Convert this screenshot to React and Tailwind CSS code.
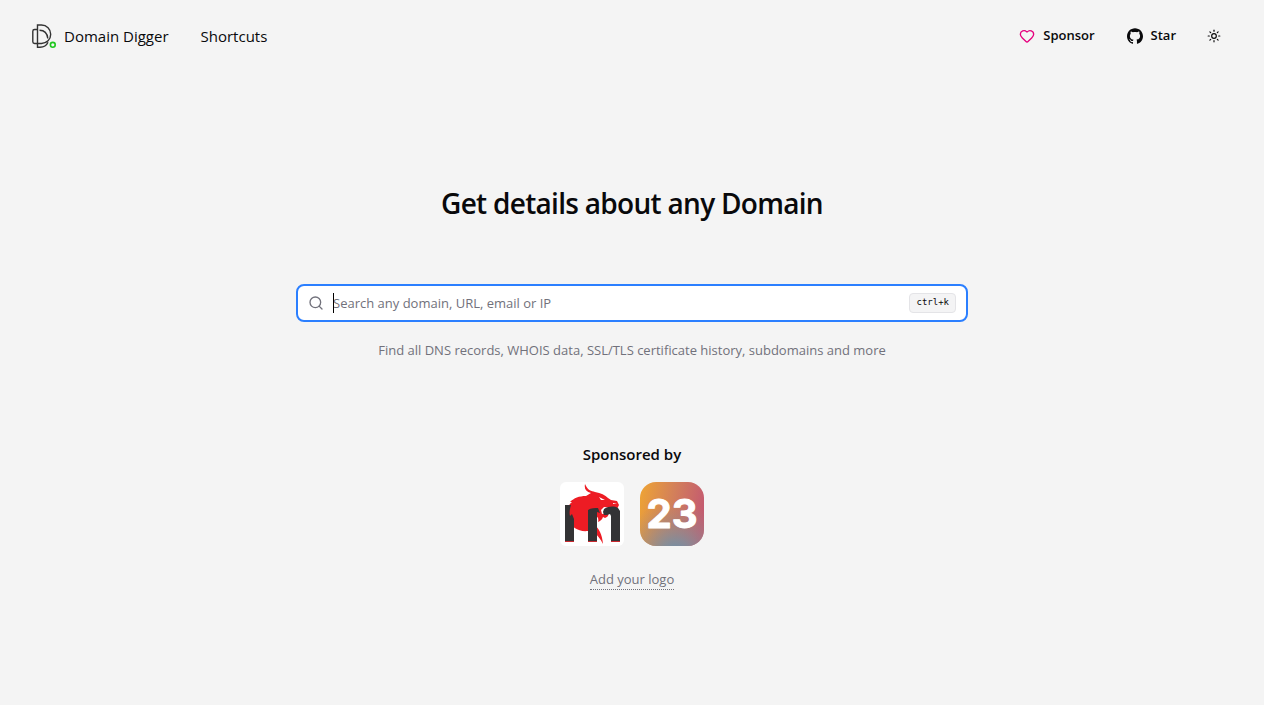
import { Heart, Search, Sun } from 'lucide-react';

const LogoIcon = () => (
  <svg viewBox="0 0 24 24" className="size-6" fill="none" aria-hidden="true">
    <g stroke="#333333" strokeWidth="1.4">
      <path d="M5.500 1h4c5.200 0 9.200 4 9.200 9.200s-4 9.300-9.200 9.300h-4z" />
      <path d="M5.500 5.500H2.600C1.500 5.500.8 6.200.8 7.200v10.600c0 1 .7 1.700 1.800 1.700h2.900" />
      <path d="M7.500 6.200c4.500 0 7.800 3 8.300 8.300" />
      <path d="M5.500 19.500v3.800H8c3.500 0 6.500-1.600 8-5" />
    </g>
    <circle cx="20.800" cy="20.800" r="2.400" stroke="#1fc71f" strokeWidth="1.600" />
  </svg>
);

const GithubIcon = () => (
  <svg viewBox="0 0 24 24" className="size-4" fill="currentColor" aria-hidden="true">
    <path d="M12 .297c-6.630 0-12 5.373-12 12 0 5.303 3.438 9.800 8.205 11.385.6.113.82-.258.82-.577 0-.285-.01-1.040-.015-2.040-3.338.724-4.042-1.610-4.042-1.610C4.422 18.070 3.633 17.700 3.633 17.700c-1.087-.744.084-.729.084-.729 1.205.084 1.838 1.236 1.838 1.236 1.070 1.835 2.809 1.305 3.495.998.108-.776.417-1.305.76-1.605-2.665-.3-5.466-1.332-5.466-5.930 0-1.310.465-2.380 1.235-3.220-.135-.303-.54-1.523.105-3.176 0 0 1.005-.322 3.300 1.230.96-.267 1.980-.399 3-.405 1.020.006 2.040.138 3 .405 2.280-1.552 3.285-1.230 3.285-1.230.645 1.653.24 2.873.12 3.176.765.84 1.230 1.910 1.230 3.220 0 4.610-2.805 5.625-5.475 5.920.42.36.81 1.096.81 2.220 0 1.606-.015 2.896-.015 3.286 0 .315.21.69.825.57C20.565 22.092 24 17.592 24 12.297c0-6.627-5.373-12-12-12" />
  </svg>
);

const DragonLogo = () => (
  <svg viewBox="0 0 64 64" className="size-16 rounded-md bg-white" aria-hidden="true">
    <path
      fill="#ed1c24"
      d="M26 4c2 4 5 5 9 6 6 1 10 3 13 6l3 2 6 1 2 4-2 4-4-1-9-1-3 3 1 4 6-1c1 2 0 4-3 5l-2-1c-1 3-3 4-5 5 1-3 0-6-4-7v10c5 3 8 9 9 19-3-6-6-9-9-12l-6-1c-9 1-17-3-20-13l-2 2c1-3 2-5 2-8l-3 1c3-4 3-8 7-11h-2c4-4 9-6 16-6l5-3c-5-1-7-4-6-9z"
    />
    <path
      fill="#333335"
      d="M5 23h6c-1 4-2 7-1 11l2-2 2 5v23H5zM28 28c3-2 7-2 10-2l2 5-3-1v30h-9zM44 27c5-3 10-3 14-1l2 3v31h-9V34l-1-2c-2 1-4 1-6 1l-1-3z"
    />
    <path fill="#c92a30" d="M5 59h9v1H5zM28 59h9v1h-9zM51 59h9v1h-9z" />
    <path fill="#ffffff" d="M39 15l6 3-4 0zM53 21l4 1-4 0z" />
  </svg>
);

const Logo23 = () => (
  <svg viewBox="0 0 64 64" className="size-16 rounded-2xl" role="img" aria-label="23">
    <defs>
      <linearGradient id="warm" x1="0" y1="0.2" x2="1" y2="0.4">
        <stop offset="0" stopColor="#eda236" />
        <stop offset="0.5" stopColor="#d3805a" />
        <stop offset="1" stopColor="#c45a70" />
      </linearGradient>
      <radialGradient id="cool" cx="0.55" cy="1.15" r="0.85">
        <stop offset="0" stopColor="#6590b0" />
        <stop offset="0.3" stopColor="#7a90a0" stopOpacity="0.8" />
        <stop offset="1" stopColor="#a08880" stopOpacity="0" />
      </radialGradient>
    </defs>
    <rect width="64" height="64" fill="url(#warm)" />
    <rect width="64" height="64" fill="url(#cool)" />
    <text
      x="32"
      y="46"
      textAnchor="middle"
      fill="#ffffff"
      stroke="#ffffff"
      strokeWidth="1"
      strokeLinejoin="round"
      className="font-['Inter'] text-[40px] font-bold"
    >
      23
    </text>
  </svg>
);

const navButton =
  'flex h-9 items-center gap-2 rounded-md px-3 text-[13px] font-semibold hover:bg-zinc-200';

function Header() {
  return (
    <header className="flex h-18 items-center justify-between px-8">
      <nav className="flex items-center gap-8 text-[15px]">
        <a href="/" className="flex items-center gap-2">
          <LogoIcon />
          Domain Digger
        </a>
        <a href="#shortcuts">Shortcuts</a>
      </nav>

      <div className="flex items-center gap-2">
        <a href="#sponsor" className={navButton}>
          <Heart className="size-4 text-[#e6007e]" />
          Sponsor
        </a>
        <a href="#github" className={navButton}>
          <GithubIcon />
          Star
        </a>
        <button
          type="button"
          aria-label="Toggle theme"
          className="flex size-9 items-center justify-center rounded-md hover:bg-zinc-200"
        >
          <Sun className="size-3.5" />
        </button>
      </div>
    </header>
  );
}

function SearchForm() {
  return (
    <form
      className="mx-auto w-full max-w-2xl"
      onSubmit={(e) => e.preventDefault()}
    >
      <div className="flex h-[38px] items-center gap-2 rounded-lg border-2 border-[#2b7fff] bg-white px-2.5">
        <Search className="size-4 shrink-0 text-zinc-500" />
        <div className="relative flex flex-1">
          <input
            type="text"
            name="q"
            autoFocus
            aria-label="Search any domain, URL, email or IP"
            placeholder="Search any domain, URL, email or IP"
            className="peer h-5 w-full min-w-0 pl-px text-[13px] caret-transparent outline-none placeholder:text-zinc-500"
          />
          <span className="pointer-events-none absolute inset-y-0 left-px hidden w-px bg-black peer-placeholder-shown:block" />
        </div>
        <kbd className="flex h-5 items-center rounded-sm border border-zinc-200 bg-zinc-100 px-1.5 font-['DejaVu_Sans_Mono',monospace] text-[9px]">
          ctrl+k
        </kbd>
      </div>
      <p className="mt-4 text-center text-[13px] leading-6 text-zinc-500">
        Find all DNS records, WHOIS data, SSL/TLS certificate history, subdomains and more
      </p>
    </form>
  );
}

export default function App() {
  return (
    <div className="min-h-screen bg-[#f4f4f4] font-['Open_Sans',sans-serif] text-zinc-950">
      <Header />

      <main className="px-4 pt-28 pb-24">
        <h1 className="mb-[62px] text-center text-[28px] leading-[38px] font-semibold tracking-tight">
          Get details about any Domain
        </h1>

        <SearchForm />

        <section className="mt-20 flex flex-col items-center">
          <h2 className="text-[15px] leading-6 font-semibold">Sponsored by</h2>
          <div className="mt-4 flex gap-4">
            <a href="#dragon" aria-label="Sponsor">
              <DragonLogo />
            </a>
            <a href="#23" aria-label="Sponsor 23">
              <Logo23 />
            </a>
          </div>
          <a
            href="#add"
            className="mt-6 border-b border-dotted border-zinc-500 text-[13px] leading-[19px] text-zinc-500"
          >
            Add your logo
          </a>
        </section>
      </main>
    </div>
  );
}
